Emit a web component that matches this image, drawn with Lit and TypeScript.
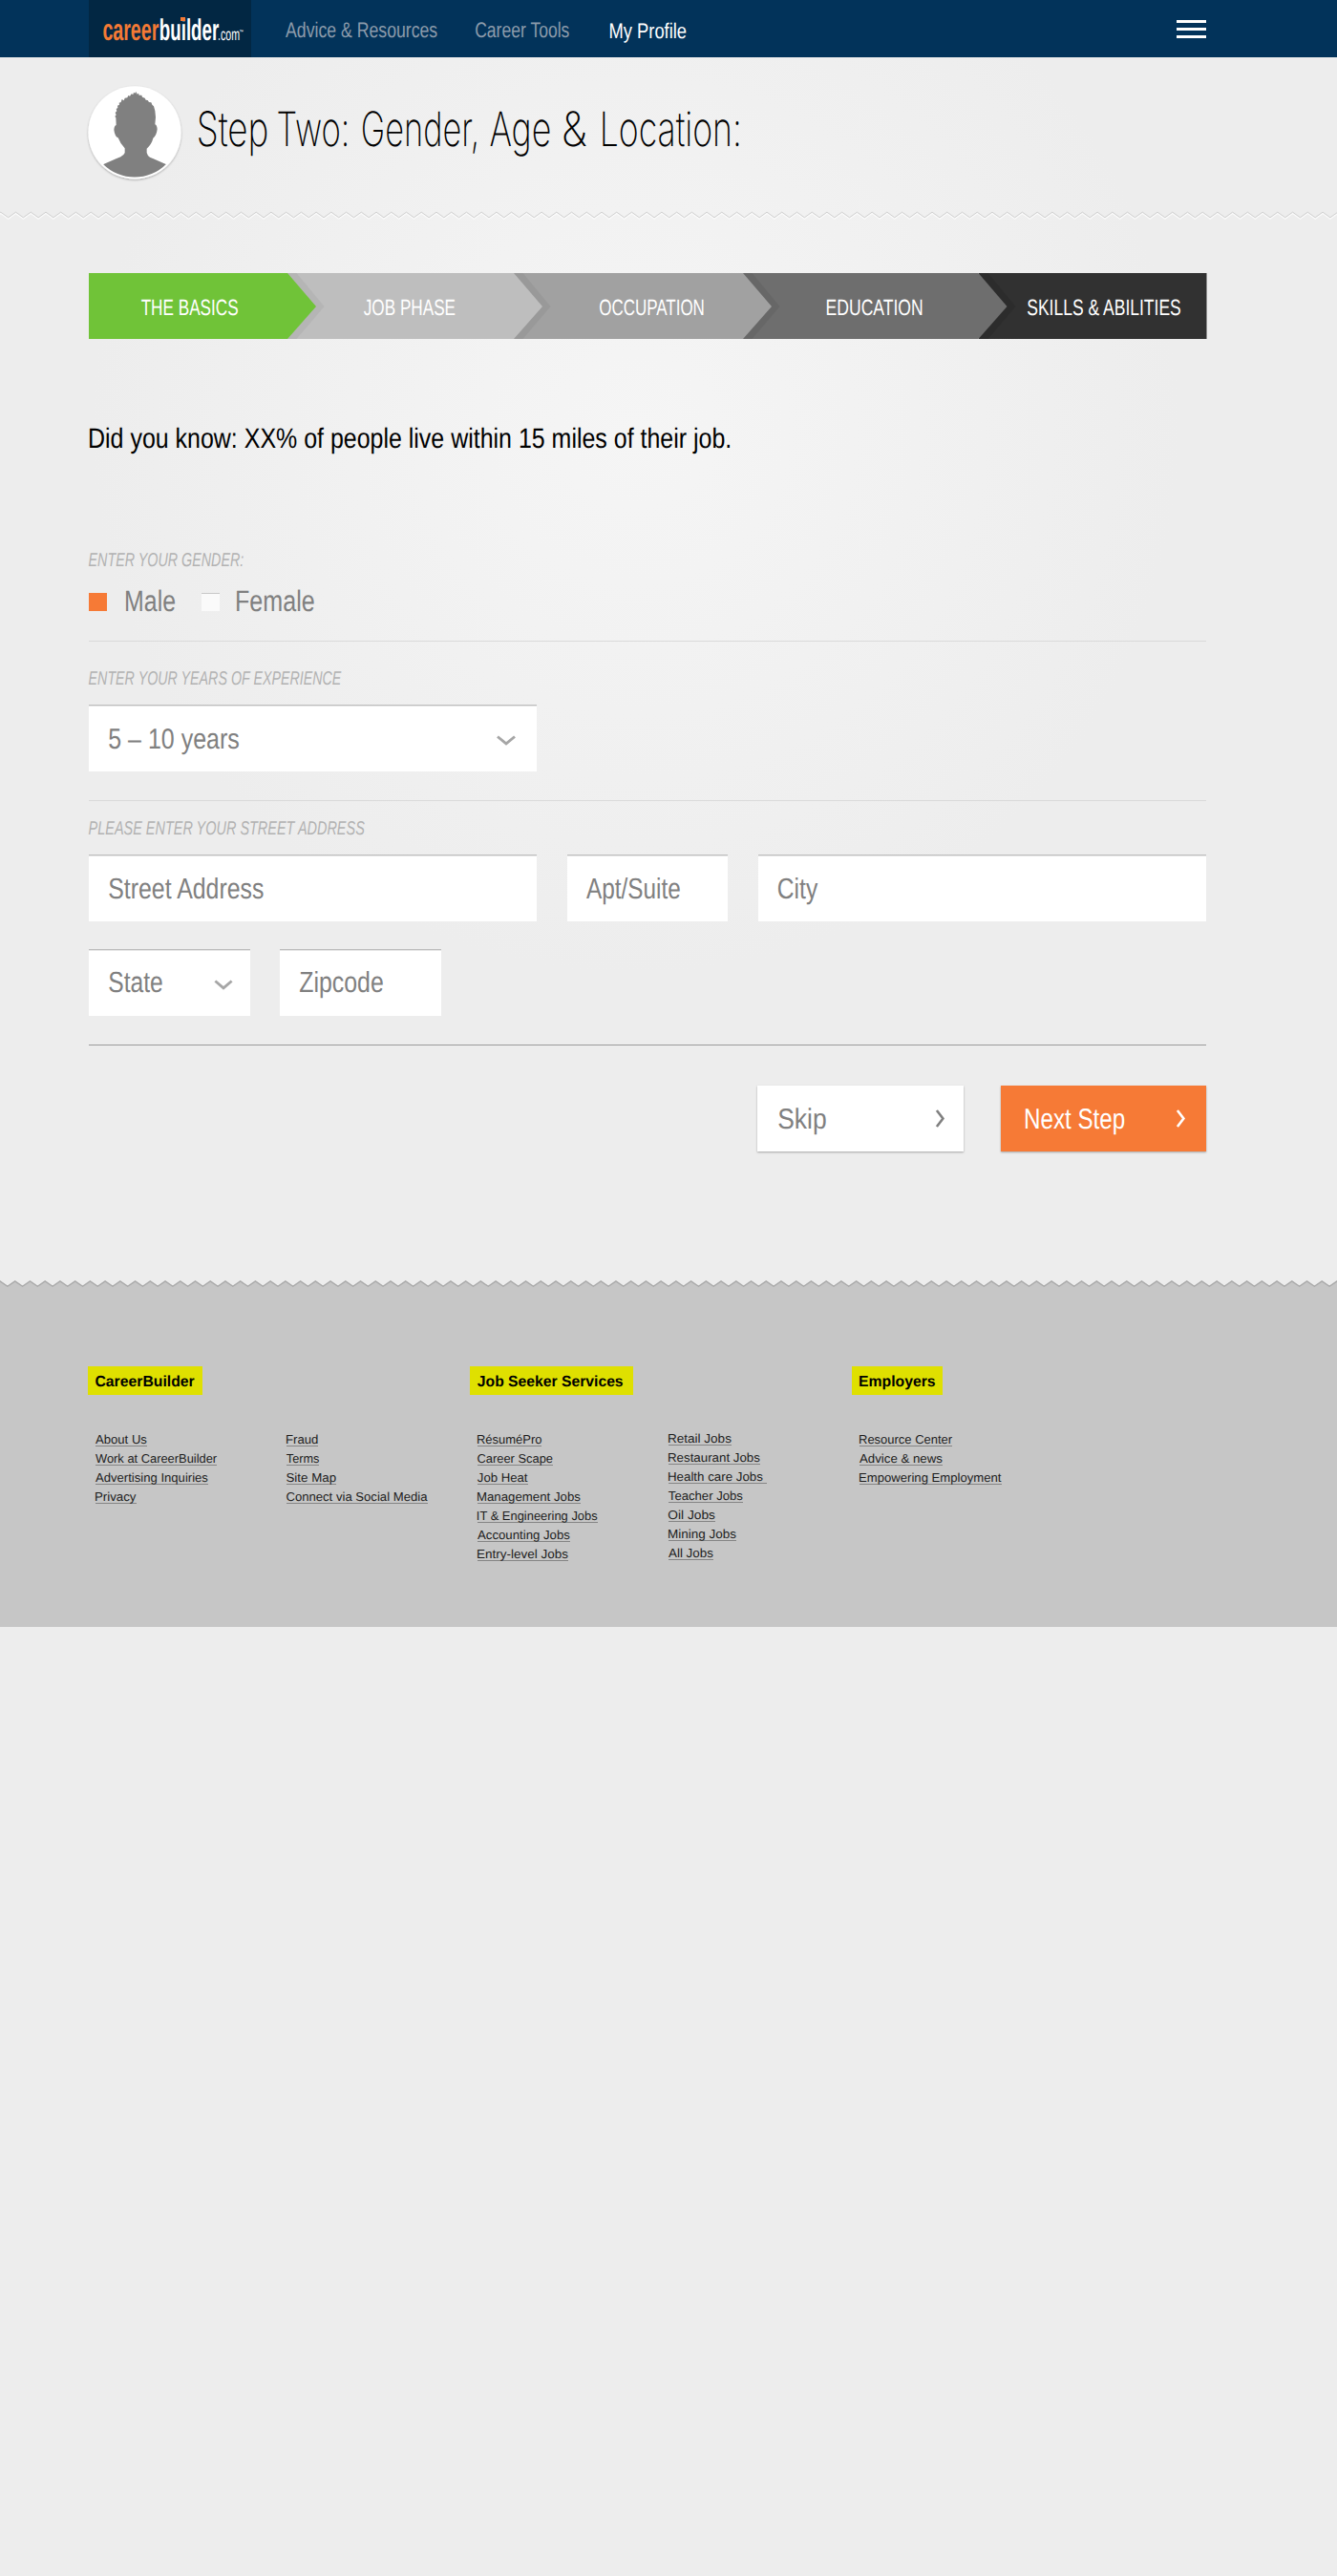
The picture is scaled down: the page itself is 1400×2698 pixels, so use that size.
import { LitElement, html, svg, css } from "lit";
import { customElement } from "lit/decorators.js";

interface Face { family: string; weight: number; style?: string; fill: string; }

const SANS = '"Liberation Sans", Arial, sans-serif';
const FACES: Record<string, Face> = {
  logoA: { family: SANS, weight: 700, fill: "#f47a35" },
  logoB: { family: SANS, weight: 700, fill: "#ffffff" },
  logoC: { family: SANS, weight: 400, fill: "#ffffff" },
  nav: { family: SANS, weight: 400, fill: "#8c9bab" },
  navOn: { family: SANS, weight: 400, fill: "#ffffff" },
  title: { family: 'Inter, "Liberation Sans", sans-serif', weight: 200, fill: "#000000" },
  step: { family: SANS, weight: 400, fill: "#ffffff" },
  lead: { family: SANS, weight: 400, fill: "#000000" },
  label: { family: SANS, weight: 400, style: "italic", fill: "#b2b2b2" },
  field: { family: SANS, weight: 400, fill: "#808080" },
  next: { family: SANS, weight: 400, fill: "#ffffff" },
  tag: { family: SANS, weight: 700, fill: "#000000" },
  link: { family: SANS, weight: 400, fill: "#1c1c1c" },
};

const ctx = document.createElement("canvas").getContext("2d")!;

/** Condensed text: glyphs are squeezed so their ink spans exactly `width` px, baseline `base` px down. */
function fit(text: string, width: number, face: string, size: number, base: number) {
  const f = FACES[face];
  // Measured at ten times the size, since ink bounds come back as whole pixels.
  ctx.font = `${f.style ?? "normal"} ${f.weight} ${size * 10}px ${f.family}`;
  const m = ctx.measureText(text);
  const left = m.actualBoundingBoxLeft / 10;
  const k = width / (left + m.actualBoundingBoxRight / 10);
  return html`<svg class="fit" width=${width} height=${base}>
    ${svg`<text transform="translate(0 ${base}) scale(${k.toFixed(4)} 1)" x=${left} y="0"
      font-family=${f.family} font-weight=${f.weight} font-style=${f.style ?? "normal"}
      font-size=${size} text-rendering="geometricPrecision" fill=${f.fill}>${text}</text>`}
  </svg>`;
}

const PERIOD = 15.73;
function zigzag(phase: number, top: number, bottom: number): string {
  const pts: string[] = [];
  for (let i = -1; i < 92; i++) {
    const x = phase + i * PERIOD;
    pts.push(`${x.toFixed(2)},${top}`, `${(x + PERIOD / 2).toFixed(2)},${bottom}`);
  }
  return pts.join(" ");
}

/** Words of the page title: text, ink width, space before. */
const TITLE: [string, number, number][] = [
  ["Step", 71.8, 0], ["Two:", 72.2, 11.8], ["Gender,", 119.3, 16.6],
  ["Age", 62.8, 13.7], ["&", 24, 14.2], ["Location:", 142.7, 17],
];

const STEPS = [
  { label: "THE BASICS", pad: 55, ink: 100.8, width: 208, fill: "#70c338", shade: "" },
  { label: "JOB PHASE", pad: 79.5, ink: 95.3, width: 237, fill: "#bebebe", shade: "#b5b5b5" },
  { label: "OCCUPATION", pad: 90, ink: 108.5, width: 240, fill: "#a1a1a1", shade: "#999999" },
  { label: "EDUCATION", pad: 88.2, ink: 99.3, width: 246.5, fill: "#6e6e6e", shade: "#676767" },
  { label: "SKILLS & ABILITIES", pad: 51.3, ink: 160.9, width: 238.5, fill: "#313131", shade: "#2c2c2c" },
];

type Link = [string, number];
const COLUMNS: { tag?: string; ink?: number; tagWidth?: number; shift?: boolean; links: Link[] }[] = [
  { tag: "CareerBuilder", ink: 103.5, tagWidth: 120, links: [["About Us", 53.5], ["Work at CareerBuilder", 127], ["Advertising Inquiries", 117.5], ["Privacy", 42.5]] },
  { links: [["Fraud", 32.5], ["Terms", 34], ["Site Map", 51.5], ["Connect via Social Media", 147.5]] },
  { tag: "Job Seeker Services", ink: 152, tagWidth: 170.5, links: [["RésuméPro", 67], ["Career Scape", 78.5], ["Job Heat", 52.5], ["Management Jobs", 107.5], ["IT & Engineering Jobs", 125.5], ["Accounting Jobs", 96.5], ["Entry-level Jobs", 94.5]] },
  { shift: true, links: [["Retail Jobs", 65.5], ["Restaurant Jobs", 95.5], ["Health care Jobs", 98.5], ["Teacher Jobs", 77.5], ["Oil Jobs", 48.5], ["Mining Jobs", 70.5], ["All Jobs", 46.5]] },
  { tag: "Employers", ink: 79, tagWidth: 95, links: [["Resource Center", 97], ["Advice & news", 86.5], ["Empowering Employment", 148.5]] },
];

@customElement("app-root")
export class AppRoot extends LitElement {
  static styles = css`
    :host { display: block; width: 1400px; height: 2698px; overflow: hidden;
      background: radial-gradient(circle 570px at 665px 450px, #f5f5f5 0%, #f3f3f3 28%, #ededed 100%) #ededed;
      font-family: "Liberation Sans", Arial, sans-serif; }
    svg { display: block; flex: none; }
    .fit { overflow: visible; }
    .bar { height: 60px; background: #02335a; display: flex; align-items: flex-start; padding: 0 137px 0 93px; }
    .logo { width: 155px; height: 60px; padding-left: 15px; background: #022743; display: flex; position: relative; }
    .logo-b { margin-left: 1.5px; }
    .logo-tm { margin-left: 1px; }
    .dot { position: absolute; left: 96px; top: 18px; width: 5px; height: 4.4px; background: #f47a35; }
    .nav1 { margin-left: 36.2px; }
    .nav2 { margin-left: 40.1px; }
    .nav3 { margin-left: 43.5px; }
    .menu { margin-left: auto; margin-top: 21px; display: flex; flex-direction: column; gap: 5px; }
    .menu i { display: block; width: 31px; height: 3px; background: #fff; }
    .hero { height: 161px; display: flex; padding-left: 88px; }
    .avatar { margin-top: 26px; }
    .title { margin-left: 13.6px; display: flex; }
    .body { width: 1263px; padding: 54px 0 0 93px; height: 1109px; box-sizing: border-box; }
    .steps { display: flex; height: 69px; }
    .step { height: 69px; position: relative; box-sizing: border-box; }
    .step-art { position: absolute; left: 0; top: 0; overflow: visible; }
    .step-label { position: relative; display: flex; z-index: 1; }
    .lead { height: 224px; padding-left: 0.8px; }
    .choices { display: flex; height: 57px; align-items: flex-start; margin-top: 21px; }
    .box { width: 19px; height: 19px; margin-top: 7px; box-sizing: border-box; }
    .on { background: #f67a36; }
    .off { background: #fafafa; margin-left: 28.3px; border-top: 1px solid #c8c8c8; }
    .t1 { margin-left: 19.7px; }
    .t2 { margin-left: 18.5px; }
    .rule { height: 1px; background: #dadada; }
    .rule.dark { background: #9b9b9b; }
    .row { display: flex; }
    .row.first { gap: 32px; }
    .row.second { gap: 31px; margin: 29px 0 30px; }
    .years { height: 66px; }
    .address { height: 56px; }
    .field { box-sizing: border-box; height: 70px; background: #fff; border-top: 1px solid #bdbdbd;
      box-shadow: inset 0 1px 0 #e6e6e6; display: flex; padding-left: 20.9px; }
    .wide { width: 469px; }
    .wide.last { margin-bottom: 30px; }
    .mid { width: 169px; }
    .chev { margin-left: auto; }
    .down1 { margin-right: 22px; }
    .down2 { margin-right: 18px; }
    .actions { display: flex; justify-content: flex-end; gap: 39px; padding-top: 42px; }
    .btn { height: 69px; display: flex; box-shadow: 0 1px 2px rgba(0,0,0,.3); box-sizing: border-box; }
    .skip { width: 216px; background: #fff; padding: 0 18px 0 22px; }
    .next { width: 215px; background: #f67a36; padding: 0 20px 0 25.8px; }
    .edge { overflow: visible; }
    .foot { background: #c6c6c6; height: 356px; display: flex; padding-left: 92px; }
    .col { width: 200px; }
    .tag { margin-top: 83px; height: 30px; margin-bottom: 36px; }
    .tag.fill { background: #dfe000; }
    .tag-text { padding-left: 8.4px; }
    .links { padding-left: 8.4px; }
    .links.shift { margin-top: -37px; padding-top: 36px; }
    .link { display: flex; width: max-content; height: 18px; box-sizing: border-box; margin-bottom: 2px; border-bottom: 1px solid #858585; }
    .link.trail { padding-right: 4.5px; }
  `;

  private chevDown(cls: string, half: number) {
    const c = 10;
    return html`<svg class="chev ${cls}" width="20" height="50"><path d="M${c - half} 32.5 L${c} 39.900 L${c + half} 32.5" fill="none" stroke="#a6a6a6" stroke-width="2.9" /></svg>`;
  }

  private chevRight(color: string) {
    return html`<svg class="chev" width="12" height="50"><path d="M1.900 26 L8.400 34.5 L1.900 43" fill="none" stroke=${color} stroke-width="2.6" /></svg>`;
  }

  private stepShape(s: (typeof STEPS)[number], i: number) {
    const w = s.width;
    const last = i === STEPS.length - 1;
    return html`<svg class="step-art" width=${w} height="69">
      <path d=${last ? `M0 0H${w}V69H0Z` : `M0 0H${w}L${w + 30} 35L${w} 69H0Z`} fill=${s.fill} />
      ${s.shade ? svg`<path d="M0 0H9.5L38.5 35L9.5 69H0Z" fill=${s.shade} />` : ""}
    </svg>`;
  }

  render() {
    return html`
      <header class="bar">
        <div class="logo">
          ${fit("career", 58, "logoA", 31.5, 41.7)}
          <span class="logo-b">${fit("builder", 61, "logoB", 31.5, 41.7)}</span>
          <span class="logo-c">${fit(".com", 21.5, "logoC", 17.5, 41.7)}</span>
          <span class="logo-tm">${fit("™", 3.5, "logoB", 5, 35)}</span>
          <span class="dot"></span>
        </div>
        <span class="nav1">${fit("Advice & Resources", 158.6, "nav", 22.5, 38.7)}</span>
        <span class="nav2">${fit("Career Tools", 98.1, "nav", 22.5, 38.7)}</span>
        <span class="nav3">${fit("My Profile", 79.3, "navOn", 22.5, 39.8)}</span>
        <div class="menu"><i></i><i></i><i></i></div>
      </header>

      <section class="hero">
        <svg class="avatar" width="106" height="106" viewBox="88 86 106 106">
          <defs>
            <filter id="s" x="-10%" y="-10%" width="120%" height="120%"><feDropShadow dx="0" dy="1" stdDeviation="0.9" flood-opacity="0.3" /></filter>
            <clipPath id="c"><circle cx="141" cy="139" r="46.6" /></clipPath>
          </defs>
          <circle cx="141" cy="138.9" r="48.6" fill="#fff" filter="url(#s)" />
          <g clip-path="url(#c)">
            <path transform="translate(85 0) scale(0.33333)" fill="#808080" d="M165 290 L169 293 L172 288 L176 296 L180 293 L182 299 L190 299 L192 305 L200 308 L203 314 L209 315 L213 321 L220 322 L223 329 L228 334 L232 348 L234 368 L232 391 Q238 393 239 406 Q237 426 226 434 Q222 452 206 467 V480 Q208 489 216 494 Q240 504 275 520 V580 H62 V520 Q100 503 124 493 Q134 488 137 480 V466 Q122 450 116 433 Q106 430 103 408 Q104 395 110 393 L109 370 L106 366 L110 361 L107 354 L112 349 L110 342 L115 339 L114 332 L120 329 L119 323 L125 321 L128 312 L134 316 L137 308 L145 307 L148 300 L153 302 L158 295 L163 297 Z" />
          </g>
        </svg>
        <div class="title">
          ${TITLE.map(([t, w, gap]) => html`<span style="margin-left:${gap}px">${fit(t, w, "title", 50, 93)}</span>`)}
        </div>
      </section>

      <svg class="edge" width="1400" height="11">
        <polyline points=${zigzag(0.8, 2.6, 8.2)} fill="none" stroke="#fbfbfb" stroke-width="1.2" />
        <polyline points=${zigzag(0.8, 1.2, 6.8)} fill="none" stroke="#d0d0d0" stroke-width="1" />
      </svg>

      <main class="body">
        <div class="steps">
          ${STEPS.map((s, i) => html`<div class="step" style="width:${s.width}px;padding-left:${s.pad}px;z-index:${STEPS.length - i}">
            ${this.stepShape(s, i)}
            <span class="step-label">${fit(s.label, s.ink, "step", 23.5, 44.3)}</span>
          </div>`)}
        </div>
        <div class="lead">${fit("Did you know: XX% of people live within 15 miles of their job.", 670, "lead", 29.5, 114)}</div>
        ${fit("ENTER YOUR GENDER:", 162, "label", 20, 14)}
        <div class="choices">
          <span class="box on"></span><span class="t1">${fit("Male", 51, "field", 31, 26.3)}</span>
          <span class="box off"></span><span class="t2">${fit("Female", 80.7, "field", 31, 26.3)}</span>
        </div>
        <div class="rule"></div>
        <div class="years">${fit("ENTER YOUR YEARS OF EXPERIENCE", 265.3, "label", 20, 45)}</div>
        <div class="field wide last">${fit("5 – 10 years", 136, "field", 30, 44.5)}${this.chevDown("down1", 9)}</div>
        <div class="rule"></div>
        <div class="address">${fit("PLEASE ENTER YOUR STREET ADDRESS", 289.5, "label", 20, 35)}</div>
        <div class="row first">
          <div class="field wide">${fit("Street Address", 163, "field", 30.5, 44.8)}</div>
          <div class="field mid">${fit("Apt/Suite", 97.8, "field", 30.5, 44.8)}</div>
          <div class="field wide">${fit("City", 41.2, "field", 30.5, 44.8)}</div>
        </div>
        <div class="row second">
          <div class="field mid">${fit("State", 55.7, "field", 30.5, 44.3)}${this.chevDown("down2", 8.6)}</div>
          <div class="field mid">${fit("Zipcode", 86.7, "field", 30.5, 44.3)}</div>
        </div>
        <div class="rule dark"></div>
        <div class="actions">
          <div class="btn skip">${fit("Skip", 49.5, "field", 30, 45)}${this.chevRight("#808080")}</div>
          <div class="btn next">${fit("Next Step", 103.2, "next", 30, 45)}${this.chevRight("#ffffff")}</div>
        </div>
      </main>

      <svg class="edge" width="1400" height="7">
        <polygon points="0,9 ${zigzag(0, 0.5, 5.7)} 1400,9" fill="#c6c6c6" />
        <polyline points=${zigzag(0, 0.9, 6.3)} fill="none" stroke="#a9a9a9" stroke-width="1.3" />
      </svg>
      <footer class="foot">
        ${COLUMNS.map((c) => html`<div class="col">
          <div class="tag ${c.tag ? "fill" : ""}" style="width:${c.tagWidth ?? 0}px">
            ${c.tag ? html`<div class="tag-text">${fit(c.tag, c.ink!, "tag", 16, 21)}</div>` : ""}
          </div>
          <div class="links ${c.shift ? "shift" : ""}">
            ${c.links.map(([t, w]) => html`<div class="link ${t === "Health care Jobs" ? "trail" : ""}">${fit(t, w, "link", 13, 15)}</div>`)}
          </div>
        </div>`)}
      </footer>
    `;
  }
}
